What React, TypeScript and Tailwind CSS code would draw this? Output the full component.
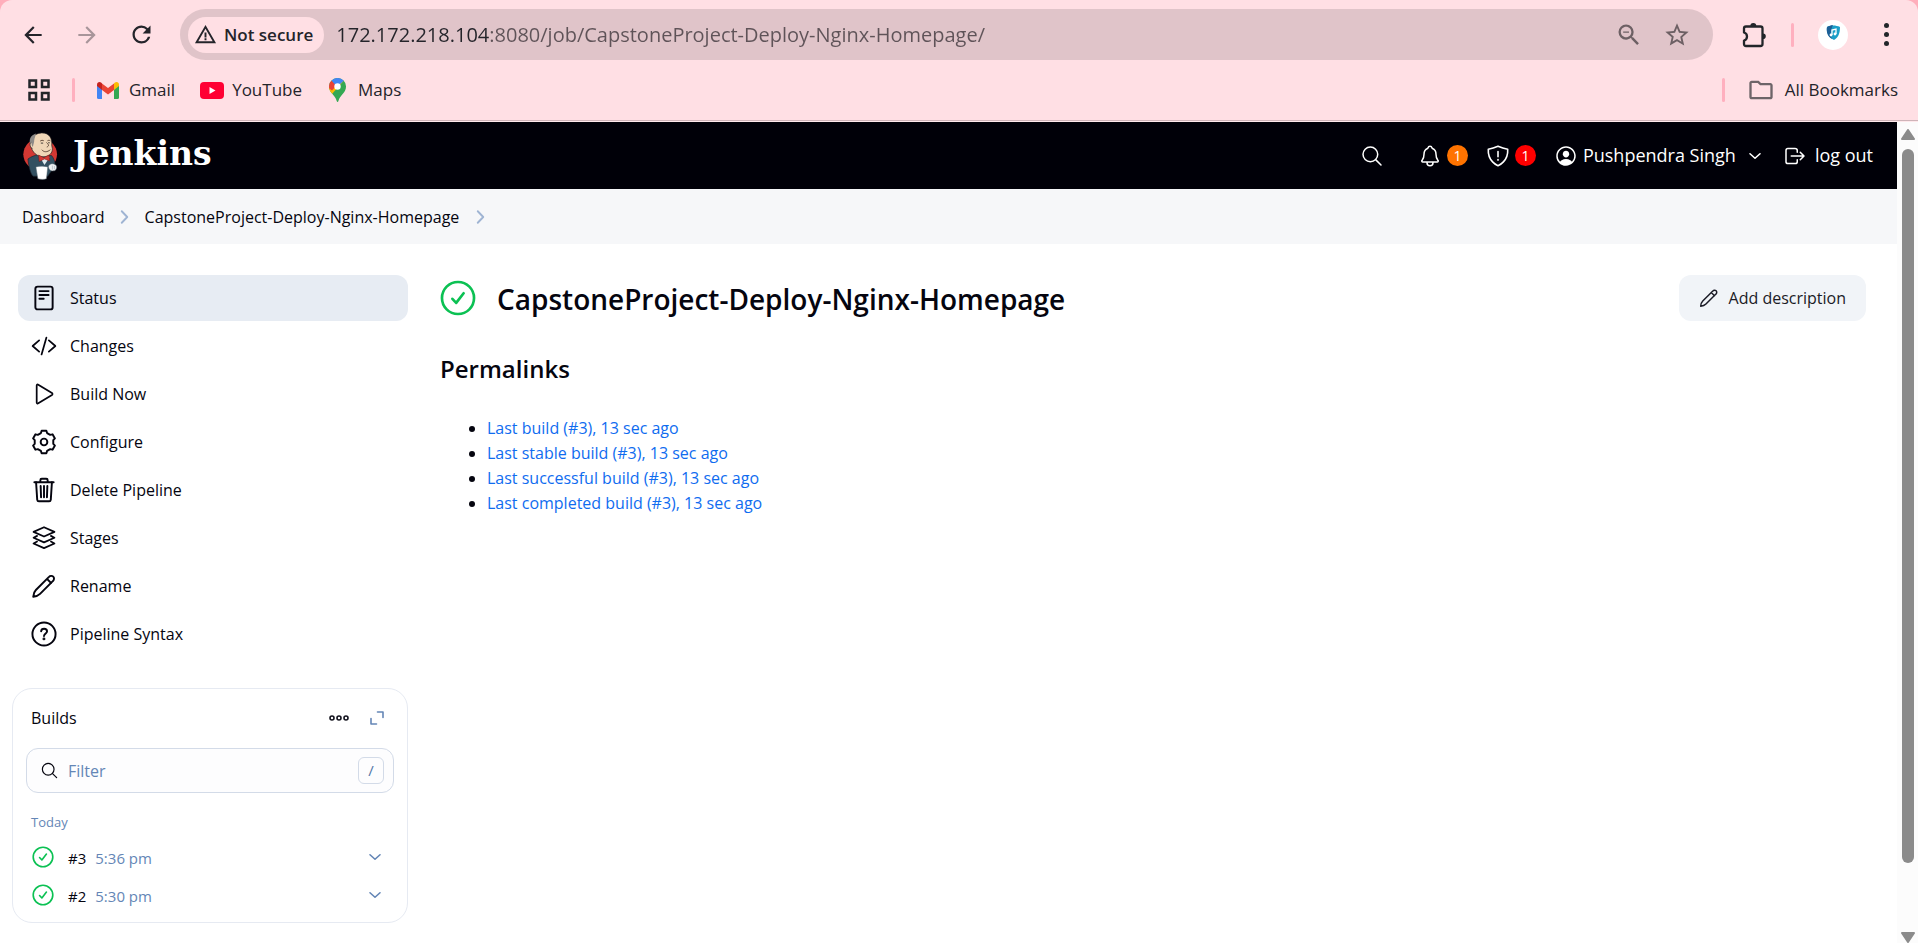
import type { ReactNode } from "react";
import { IoNotificationsOutline, IoPersonCircleOutline, IoLogOutOutline, IoSearchOutline } from "react-icons/io5";
import { MdArrowBack, MdArrowForward, MdOutlineFolder, MdOutlineZoomOut, MdRefresh, MdStarOutline, MdWarningAmber } from "react-icons/md";

type IconProps = { className?: string };

function Stroke({ className, width = 32, children }: IconProps & { width?: number; children: ReactNode }) {
  return (
    <svg viewBox="0 0 512 512" className={className} fill="none" stroke="currentColor" strokeWidth={width} strokeLinecap="round" strokeLinejoin="round" aria-hidden="true">
      {children}
    </svg>
  );
}

const DocIcon = () => (
  <Stroke className="size-[26px]" width={38}>
    <rect x="86" y="32" width="340" height="448" rx="44" />
    <path d="M166 120h180M166 196h180M166 272h84" />
  </Stroke>
);
const CodeIcon = () => (
  <Stroke className="size-[26px]" width={34}>
    <path d="M160 368L32 256l128-112M352 368l128-112-128-112M304 90l-96 332" />
  </Stroke>
);
const PlayIcon = () => (
  <Stroke className="size-[26px]" width={34}>
    <path d="M112 89v334c0 17 17 25 31 17l270-164c14-9 14-31 0-40L143 72c-14-8-31 0-31 17z" />
  </Stroke>
);

// Six-toothed gear outline, built from [angle, radius] pairs repeated every 60 degrees.
const gearPoints = [0, 60, 120, 180, 240, 300]
  .flatMap((a) => [[a - 19, 186], [a - 12, 226], [a + 12, 226], [a + 19, 186]])
  .map(([a, r]) => {
    const t = (a * Math.PI) / 180;
    return `${(256 + r * Math.sin(t)).toFixed(1)},${(256 - r * Math.cos(t)).toFixed(1)}`;
  })
  .join(" ");
const GearIcon = () => (
  <Stroke className="size-[26px]" width={38}>
    <polygon points={gearPoints} />
    <circle cx="256" cy="256" r="66" />
  </Stroke>
);
const TrashIcon = () => (
  <Stroke className="size-[26px]" width={38}>
    <path d="M100 104l22 340c2 20 14 34 34 34h200c20 0 32-14 34-34l22-340" />
    <path d="M66 104h380M184 100V64q0-28 28-28h88q28 0 28 28v36M256 176v224M190 176l8 224M322 176l-8 224" />
  </Stroke>
);
const LayersIcon = () => (
  <Stroke className="size-[26px]" width={34}>
    <path d="M256 44l206 92-206 92-206-92zM120 214l-70 36 206 92 206-92-70-36M120 326l-70 38 206 92 206-92-70-38" />
  </Stroke>
);
const PencilIcon = ({ className = "size-[26px]" }: IconProps) => (
  <Stroke className={className} width={38}>
    <path d="M44 468c2-52 16-98 52-134L354 76c22-24 62-26 84-4s20 62-4 84L178 412c-34 34-80 52-134 56zM314 116l82 80" />
  </Stroke>
);
const HelpIcon = () => (
  <Stroke className="size-[26px]" width={38}>
    <circle cx="256" cy="256" r="228" />
    <path d="M200 202c2-34 26-50 58-50 34 0 58 20 58 50 0 42-56 44-60 94" />
    <circle cx="255" cy="352" r="10" fill="currentColor" />
  </Stroke>
);
const ShieldIcon = () => (
  <Stroke className="size-6" width={34}>
    <path d="M463 112C374 96 337 84 256 48 175 84 138 96 49 112c-16 257 192 346 207 352 15-6 223-95 207-352zM256 160v112" />
    <circle cx="256" cy="340" r="6" />
  </Stroke>
);
const ChevronDown = ({ className }: IconProps) => (
  <Stroke className={className} width={52}>
    <path d="M96 184l160 144 160-144" />
  </Stroke>
);
const ChevronRight = () => (
  <Stroke className="size-4 text-[#9fb4d3]" width={60}>
    <path d="M152 72l176 184-176 184" />
  </Stroke>
);
const SuccessIcon = ({ className }: IconProps) => (
  <Stroke className={className} width={38}>
    <circle cx="256" cy="256" r="228" />
    <path d="M176 268l54 58 106-138" />
  </Stroke>
);

function Butler() {
  return (
    <svg viewBox="66 394 112 150" className="h-[50px] w-[37px]" aria-hidden="true">
      <ellipse cx="121" cy="464" rx="51" ry="49" fill="#d33833" />
      <path d="M84 478c10-8 22-10 30-14l42 4c6 8 10 18 10 28l-8 14-14 20H100c-8-6-14-30-16-52z" fill="#335061" stroke="#1b2630" strokeWidth="2" />
      <path d="M94 444c-6-22 4-44 32-45 24 0 32 18 30 38l2 10c0 14-10 22-22 24-18 2-34-6-42-27z" fill="#f0d6b7" stroke="#231f20" strokeWidth="2" />
      <path d="M92 438c-6-16-2-31 16-37-1 8-4 13-5 20 0 7-2 10-4 20z" fill="#8d8a87" />
      <path d="M94 428c-6 2-4 16 4 18" fill="#f0d6b7" stroke="#231f20" strokeWidth="2" />
      <path d="M121 424c3-3 8-3 11-1M143 423c3-2 6-2 9 0M140 428c6 6 10 10 1 14M126 450c6 8 16 8 26 0" fill="none" stroke="#4a3326" strokeWidth="2.500" />
      <path d="M123 430h7M145 429h5" stroke="#222" strokeWidth="2.500" />
      <path d="M120 472l14 24 16-24-16 6z" fill="#dfe9ee" />
      <path d="M116 466l16 8 16-8 2 18-16-6-16 8z" fill="#d33833" stroke="#7c1714" strokeWidth="1.500" />
      <path d="M108 502c12-4 26-2 36 0l-4 36c-8 3-18 2-26 0z" fill="#fff" stroke="#52616c" strokeWidth="1.500" />
      <path d="M146 500c4-8 12-10 22-4 6 4 2 18-6 18-8 2-16-4-16-14z" fill="#eef1f3" stroke="#52616c" strokeWidth="1.500" />
      <path d="M158 498v12M164 499v10" stroke="#8797a3" strokeWidth="1.500" />
    </svg>
  );
}

const GmailIcon = () => (
  <svg viewBox="0 0 22 17" className="h-[17px] w-[22px]" aria-hidden="true">
    <path d="M0 3v12.500Q0 17 1.500 17H5V7z" fill="#4285f4" />
    <path d="M22 3v12.500q0 1.500-1.500 1.500H17V7z" fill="#34a853" />
    <path d="M17 1.500V8l5-4V2.500C22 .3 19.500-.8 17.600.8z" fill="#fbbc04" />
    <path d="M5 8V1.500L11 6l6-4.500V8l-6 4.500z" fill="#ea4335" />
    <path d="M0 2.500V4l5 4V1.500L4.400.8C2.500-.8 0 .3 0 2.500z" fill="#c5221f" />
  </svg>
);
const YouTubeIcon = () => (
  <svg viewBox="0 0 24 17" className="h-[17px] w-6" aria-hidden="true">
    <rect width="24" height="17" rx="4" fill="#ff0033" />
    <path d="M9.500 5v7l6-3.500z" fill="#fff" />
  </svg>
);
const MapsIcon = () => (
  <svg viewBox="0 0 17 24" className="h-6 w-[17px]" aria-hidden="true">
    <clipPath id="pin">
      <path d="M8.500 0A8.300 8.300 0 0 0 0 8.400c0 3 1.200 4.800 3 7 2.400 3 4 4.600 4.700 7.700.3 1.200 1.400 1.200 1.700 0 .7-3.100 2.300-4.700 4.700-7.700 1.800-2.200 2.900-4 2.900-7A8.300 8.300 0 0 0 8.500 0z" />
    </clipPath>
    <g clipPath="url(#pin)">
      <path d="M0 0h17v24H0z" fill="#34a853" />
      <path d="M14.500 3L3 16l-4-5 7-6z" fill="#fbbc04" />
      <path d="M-1 9.500V5l3.500-2.500L8 7 3 12.500z" fill="#ea4335" />
      <path d="M2.500 2.500L6-1h6l3 3.500L8 9z" fill="#4285f4" />
    </g>
    <circle cx="8.500" cy="8.500" r="3.200" fill="#fff" />
  </svg>
);
const PuzzleIcon = () => (
  <svg viewBox="0 0 26 30" className="h-[30px] w-[26px]" fill="none" aria-hidden="true">
    <path d="M3 8.500Q3 6.500 5 6.500H19.500q2 0 2 2V24q0 2-2 2H5Q3 26 3 24v-3.500c4-1 4-7 0-8z" stroke="#222529" strokeWidth="2.300" strokeLinejoin="round" />
    <path d="M9.300 6a3 3 0 0 1 6 0zM22 13.500a2.800 2.800 0 0 1 0 5.600z" fill="#222529" />
  </svg>
);
const AvatarIcon = () => (
  <svg viewBox="0 0 30 30" className="size-[30px]" aria-hidden="true">
    <circle cx="15" cy="15" r="15" fill="#fff" />
    <path d="M9 7c3-2 9-2 13 0 0 5-1 10-6 13-5-2-8-7-7-13z" fill="#1a9fc8" />
    <path d="M9 7c2-1 4-2 6-2-2 4-3 9-1 14-4-2-6-7-5-12z" fill="#1d5f96" />
    <path d="M14 15v-5l4-1v5" stroke="#fff" strokeWidth="1.300" fill="none" />
    <circle cx="13" cy="15" r="1.400" fill="#fff" />
    <circle cx="17" cy="14" r="1.400" fill="#fff" />
  </svg>
);

const Divider = () => <span className="h-6 w-[3px] rounded-full bg-[#ffb0bf]" />;

function BrowserChrome() {
  return (
    <div className="bg-[#ffaebb]">
      <div className="h-[122px] rounded-t-xl border-b border-[#ffe9ec] bg-[#ffdfe4] text-[#24242a]">
        <div className="flex h-[69px] items-center pr-5 pl-5">
          <div className="flex w-40 items-center gap-7">
            <button aria-label="Back"><MdArrowBack className="size-[26px]" /></button>
            <button aria-label="Forward" className="text-[#a8959a]"><MdArrowForward className="size-[26px]" /></button>
            <button aria-label="Reload"><MdRefresh className="size-[27px]" /></button>
          </div>
          <div className="flex h-[51px] flex-1 items-center rounded-full bg-[#e0c4c9] px-2">
            <button className="flex h-9 items-center gap-[7px] rounded-full bg-[#ffdfe4] pr-[11px] pl-[6px] text-[17px] font-semibold">
              <MdWarningAmber className="size-[23px]" />
              Not secure
            </button>
            <input
              aria-label="Address"
              readOnly
              value="172.172.218.104:8080/job/CapstoneProject-Deploy-Nginx-Homepage/"
              className="ml-3 h-10 flex-1 bg-[linear-gradient(90deg,#24242a_153px,#5f5358_153px)] bg-clip-text text-[20px] text-transparent outline-none"
            />
            <button aria-label="Zoom" className="text-[#6d6064]"><MdOutlineZoomOut className="size-7" /></button>
            <button aria-label="Bookmark this page" className="mr-[14px] ml-5 text-[#6d6064]"><MdStarOutline className="size-7" /></button>
          </div>
          <div className="flex items-center pl-7">
            <button aria-label="Extensions"><PuzzleIcon /></button>
            <span className="mr-[24px] ml-6 flex"><Divider /></span>
            <button aria-label="Profile"><AvatarIcon /></button>
            <button aria-label="Menu" className="ml-[26px] flex w-6 flex-col items-center gap-1">
              <span className="size-[5px] rounded-full bg-[#222529]" />
              <span className="size-[5px] rounded-full bg-[#222529]" />
              <span className="size-[5px] rounded-full bg-[#222529]" />
            </button>
          </div>
        </div>
        <div className="flex h-[52px] items-start border-b border-[#cfb4b9] pr-5 pl-7 text-[17px]">
          <div className="flex h-[42px] flex-1 items-center">
            <button aria-label="Apps">
              <svg viewBox="0 0 22 22" className="size-[22px]" fill="none" stroke="#222529" strokeWidth="2.500">
                <path d="M1.500 1.500h6.500v6.500h-6.500zM14 1.500h6.500v6.500H14zM1.500 14h6.500v6.500h-6.500zM14 14h6.500v6.500H14z" />
              </svg>
            </button>
            <span className="ml-[22px] flex"><Divider /></span>
            <a href="#gmail" className="ml-[22px] flex items-center gap-[10px]"><GmailIcon />Gmail</a>
            <a href="#youtube" className="ml-[25px] flex items-center gap-2"><YouTubeIcon />YouTube</a>
            <a href="#maps" className="ml-[27px] flex items-center gap-3"><MapsIcon />Maps</a>
            <span className="ml-auto flex"><Divider /></span>
            <button className="ml-[22px] flex items-center gap-[10px]"><MdOutlineFolder className="size-7 text-[#6d6468]" />All Bookmarks</button>
          </div>
        </div>
      </div>
    </div>
  );
}

const Badge = ({ className, children }: { className: string; children: ReactNode }) => (
  <span className={`flex h-[21px] w-[21px] items-center justify-center rounded-full text-[14px] ${className}`}>{children}</span>
);

function Header() {
  return (
    <header className="flex h-[67px] items-center bg-[#000008] pr-6 pl-[22px] text-[18px] text-white">
      <a href="#home" className="flex flex-1 items-center gap-[14px]">
        <Butler />
        <span className="pb-1 font-['DejaVu_Serif',serif] text-[33px] leading-10 font-bold">Jenkins</span>
      </a>
      <button aria-label="Search"><IoSearchOutline className="size-6" /></button>
      <button className="ml-[34px] flex items-center gap-[5px]" aria-label="Notifications"><IoNotificationsOutline className="size-6" /><Badge className="bg-[#ff7300]">1</Badge></button>
      <button className="ml-[18px] flex items-center gap-[5px]" aria-label="Security warnings"><ShieldIcon /><Badge className="bg-[#ff0000]">1</Badge></button>
      <button className="ml-[18px] flex items-center gap-[5px]"><IoPersonCircleOutline className="size-6" />Pushpendra Singh<ChevronDown className="ml-[6px] size-4" /></button>
      <a href="#logout" className="ml-5 flex items-center gap-2"><IoLogOutOutline className="size-6" />log out</a>
    </header>
  );
}

const tasks: [string, ReactNode][] = [
  ["Status", <DocIcon />],
  ["Changes", <CodeIcon />],
  ["Build Now", <PlayIcon />],
  ["Configure", <GearIcon />],
  ["Delete Pipeline", <TrashIcon />],
  ["Stages", <LayersIcon />],
  ["Rename", <PencilIcon />],
  ["Pipeline Syntax", <HelpIcon />],
];

const builds = [
  ["#3", "5:36 pm"],
  ["#2", "5:30 pm"],
];

function Builds() {
  return (
    <section className="mt-[31px] ml-3 rounded-[20px] border border-[#e6eaf2] px-[13px] pt-[11px] pb-2">
      <div className="flex h-9 items-center px-[5px]">
        <h2 className="flex-1 text-[16px]">Builds</h2>
        <button aria-label="More actions" className="mr-[21px]">
          <svg viewBox="0 0 20 6" className="h-[6px] w-5" fill="none" stroke="#14141f" strokeWidth="1.600">
            <circle cx="3" cy="3" r="2" /><circle cx="10" cy="3" r="2" /><circle cx="17" cy="3" r="2" />
          </svg>
        </button>
        <button aria-label="Expand" className="mr-[5px] text-[#6486b6]">
          <svg viewBox="0 0 14 14" className="size-[14px]" fill="none" stroke="currentColor" strokeWidth="1.600" strokeLinecap="round" strokeLinejoin="round">
            <path d="M7.500 1H13v5.500M1 7.500V13h5.500" />
          </svg>
        </button>
      </div>
      <label className="mt-3 flex h-[45px] items-center rounded-xl border border-[#d3dbe8] bg-[#fdfdfe] px-[9px]">
        <IoSearchOutline className="ml-1 size-[19px]" />
        <input aria-label="Filter builds" placeholder="Filter" className="ml-[9px] min-w-0 flex-1 bg-transparent text-[16px] outline-none placeholder:text-[#6486b6]" />
        <kbd className="flex h-[27px] w-[26px] items-center justify-center rounded-md border border-[#d3dbe8] font-[inherit] text-[15px] text-[#5577a8]">/</kbd>
      </label>
      <h3 className="mt-[17px] px-[5px] text-[13px] leading-6 text-[#6486b6]">Today</h3>
      <ul className="mt-1">
        {builds.map(([id, time]) => (
          <li key={id} className="flex h-[38px] items-center px-[6px] text-[15px]">
            <SuccessIcon className="size-[22px] text-[#0bc153]" />
            <a href="#build" className="mt-[2px] ml-[14px] flex gap-[9px]">{id}<span className="text-[#6486b6]">{time}</span></a>
            <button aria-label={`Build ${id} menu`} className="mr-[5px] ml-auto text-[#6486b6]"><ChevronDown className="size-4" /></button>
          </li>
        ))}
      </ul>
    </section>
  );
}

const links = ["Last build (#3), 13 sec ago", "Last stable build (#3), 13 sec ago", "Last successful build (#3), 13 sec ago", "Last completed build (#3), 13 sec ago"];

export default function App() {
  return (
    <div className="flex min-h-screen flex-col bg-white font-['Open_Sans','Noto_Sans',sans-serif] text-[#05050f]">
      <BrowserChrome />
      <div className="flex flex-1">
        <div className="min-w-0 flex-1">
          <Header />
          <nav aria-label="Breadcrumb" className="flex h-[55px] items-center bg-[#f6f7f9] px-[22px] text-[16px]">
            <a href="#dashboard">Dashboard</a>
            <span className="mx-3"><ChevronRight /></span>
            <a href="#job">CapstoneProject-Deploy-Nginx-Homepage</a>
            <span className="mx-[14px]"><ChevronRight /></span>
          </nav>
          <div className="flex pt-[31px]">
            <aside className="w-[408px] shrink-0">
              <ul className="ml-[18px] flex flex-col gap-[2px] text-[16px]">
                {tasks.map(([name, icon], i) => (
                  <li key={name}>
                    <a href="#task" className={`flex h-[46px] items-center gap-[13px] rounded-xl px-[13px] ${i === 0 ? "bg-[#e7ecf3]" : ""}`}>{icon}{name}</a>
                  </li>
                ))}
              </ul>
              <Builds />
            </aside>
            <main className="min-w-0 flex-1 pr-[31px] pl-8">
              <div className="flex h-[46px] items-center">
                <SuccessIcon className="size-9 text-[#0bc153]" />
                <h1 className="mt-[2px] ml-[21px] flex-1 text-[28px] font-semibold">CapstoneProject-Deploy-Nginx-Homepage</h1>
                <button className="flex h-[46px] items-center gap-[10px] rounded-xl bg-[#f1f4f8] px-5 text-[16px] text-[#1b1b26]"><PencilIcon className="size-5" />Add description</button>
              </div>
              <h2 className="mt-[30px] text-[24px] leading-9 font-semibold">Permalinks</h2>
              <ul className="mt-[29px] list-disc pl-[47px] text-[16px] leading-[25px]">
                {links.map((l) => (
                  <li key={l}><a href="#permalink" className="text-[#0f6cf0]">{l}</a></li>
                ))}
              </ul>
            </main>
          </div>
        </div>
        <div aria-hidden="true" className="flex w-[21px] flex-col items-center bg-[#fcfcfc] pt-[7px]">
          <svg viewBox="0 0 14 11" className="h-[11px] w-[14px]"><path d="M7 1L13 10H1z" fill="#8b8b8b" stroke="#8b8b8b" strokeLinejoin="round" strokeWidth="2" /></svg>
          <div className="mt-[9px] mb-[69px] w-3 flex-1 rounded-full bg-[#8b8b8b]" />
          <svg viewBox="0 0 14 11" className="h-[11px] w-[14px]"><path d="M7 10L13 1H1z" fill="#8b8b8b" stroke="#8b8b8b" strokeLinejoin="round" strokeWidth="2" /></svg>
        </div>
      </div>
    </div>
  );
}
